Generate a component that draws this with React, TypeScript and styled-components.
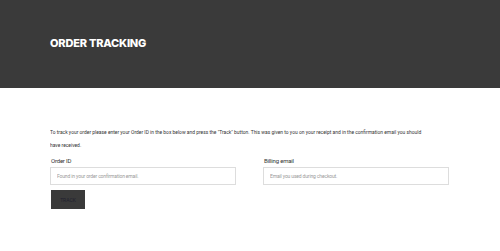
import React from "react";
import styled, { createGlobalStyle } from "styled-components";

const GlobalStyle = createGlobalStyle`
  body {
    margin: 0;
    background: #ffffff;
    font-family: Roboto, "Liberation Sans", sans-serif;
  }
`;

const Hero = styled.header`
  height: 88px;
  background: #3a3a3a;
  display: flex;
  align-items: center;
  padding: 0 50px;
  box-sizing: border-box;
`;

const Title = styled.h1`
  margin: 0 0 3px;
  font-family: Inter, "DejaVu Sans", sans-serif;
  font-weight: 800;
  font-size: 11px;
  letter-spacing: -0.2px;
  color: #ffffff;
`;

const Content = styled.main`
  padding: 37px 50px 0;
`;

const Intro = styled.p`
  margin: 0 0 5px;
  font-size: 6px;
  line-height: 13px;
  color: #333333;
  transform: scaleX(0.82);
  transform-origin: left;
  width: 114%;
`;

const Fields = styled.div`
  display: grid;
  grid-template-columns: 1fr 1fr;
  column-gap: 27px;
  width: 399px;
`;

const Field = styled.label`
  display: flex;
  flex-direction: column;
`;

const Label = styled.span`
  font-size: 6px;
  line-height: 10px;
  letter-spacing: -0.2px;
  color: #333333;
  margin: 0 0 1px 1px;
`;

const Input = styled.input`
  height: 18px;
  box-sizing: border-box;
  border: 1px solid #dddddd;
  padding: 0 6px;
  font-family: Roboto, "Liberation Sans", sans-serif;
  font-size: 5px;
  letter-spacing: -0.15px;
  color: #333;
  outline: none;
  &::placeholder {
    color: #9a9a9a;
  }
`;

const TrackButton = styled.button`
  display: block;
  margin: 5px 0 0 1px;
  width: 34px;
  height: 19px;
  border: none;
  background: #3a3a3a;
  color: #1f1f2e;
  font-family: Roboto, "Liberation Sans", sans-serif;
  font-size: 5px;
  text-transform: uppercase;
  padding: 0;
`;

export default function App() {
  return (
    <>
      <GlobalStyle />
      <Hero>
        <Title>ORDER TRACKING</Title>
      </Hero>
      <Content>
        <Intro>
          To track your order please enter your Order ID in the box below and press the "Track" button. This was
          given to you on your receipt and in the confirmation email you should have received.
        </Intro>
        <Fields>
          <Field>
            <Label>Order ID</Label>
            <Input placeholder="Found in your order confirmation email." />
          </Field>
          <Field>
            <Label>Billing email</Label>
            <Input placeholder="Email you used during checkout." />
          </Field>
        </Fields>
        <TrackButton>Track</TrackButton>
      </Content>
    </>
  );
}
